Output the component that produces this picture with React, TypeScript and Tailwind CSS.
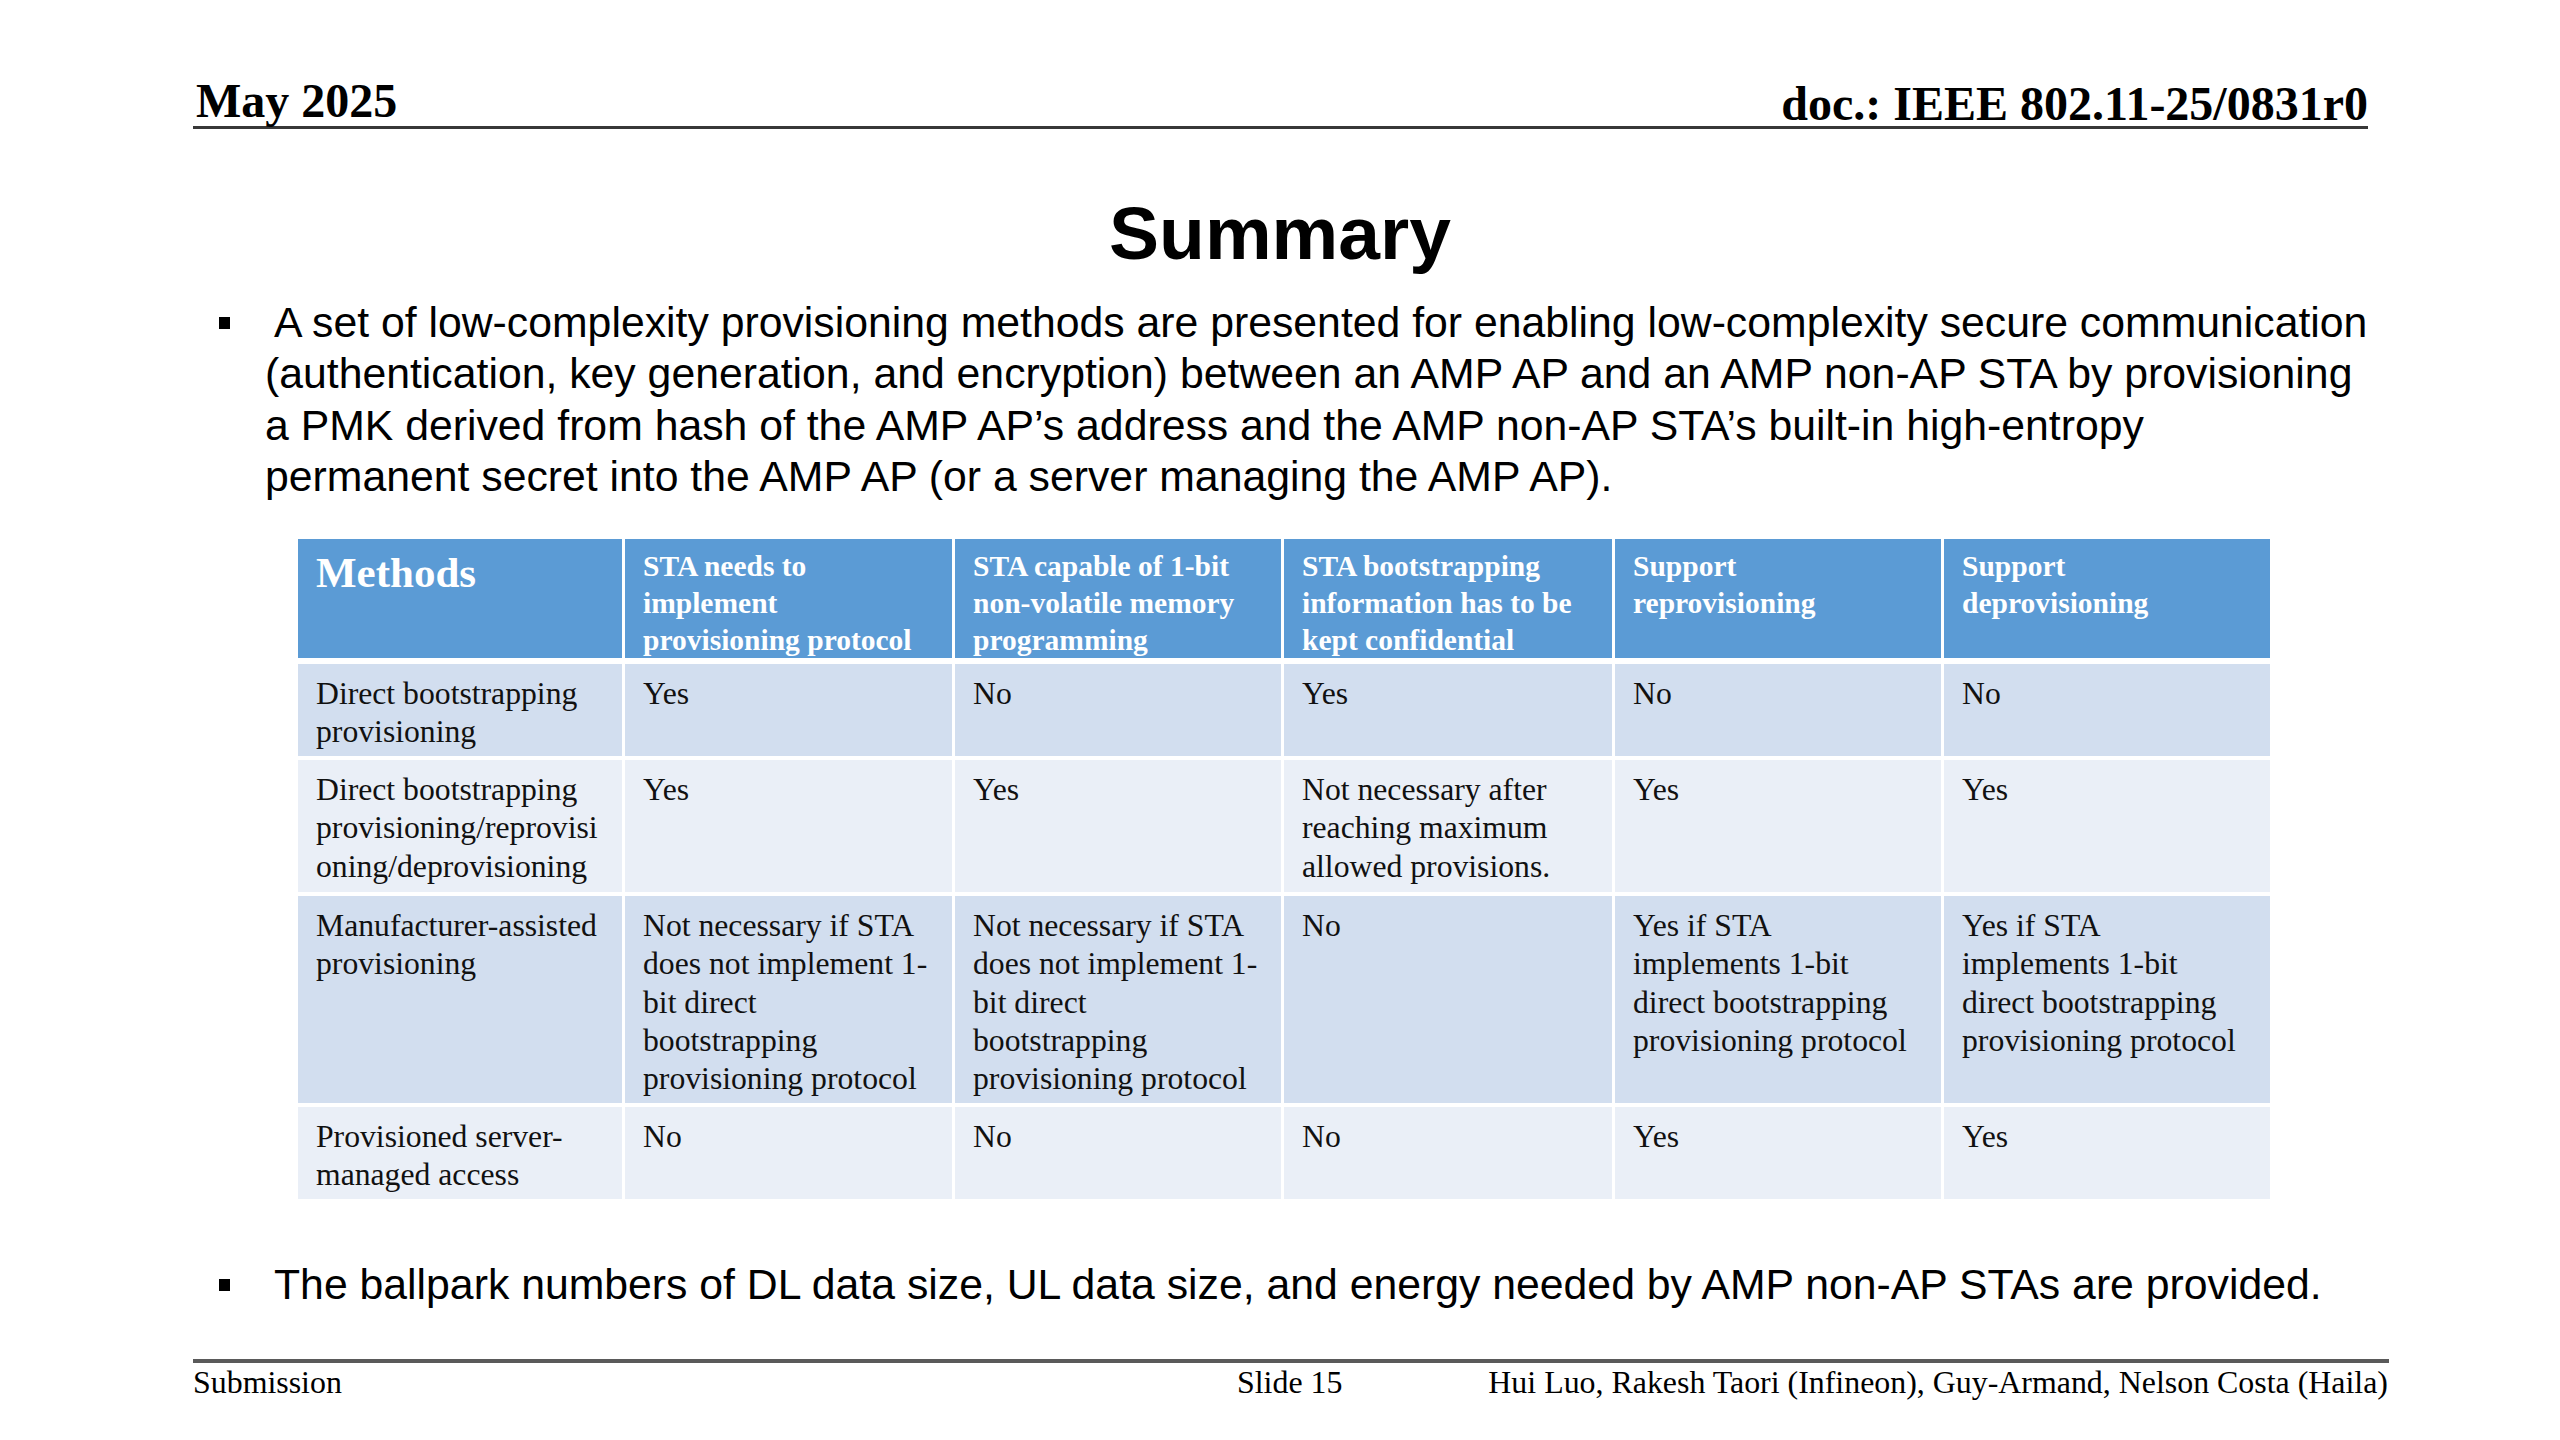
import React from "react";

const serif = { fontFamily: '"Liberation Serif", "Times New Roman", serif' };
const sans = { fontFamily: '"Liberation Sans", Arial, sans-serif' };

type Cell = string[];

const header: Cell[] = [
  ["STA needs to", "implement", "provisioning protocol"],
  ["STA capable of 1-bit", "non-volatile memory", "programming"],
  ["STA bootstrapping", "information has to be", "kept confidential"],
  ["Support", "reprovisioning"],
  ["Support", "deprovisioning"],
];

const notNecessary = ["Not necessary if STA", "does not implement 1-", "bit direct", "bootstrapping", "provisioning protocol"];
const yesIf = ["Yes if STA", "implements 1-bit", "direct bootstrapping", "provisioning protocol"];

const rows: { h: string; bg: string; cells: Cell[] }[] = [
  {
    h: "h-[92px]",
    bg: "bg-[#d2deef]",
    cells: [["Direct bootstrapping", "provisioning"], ["Yes"], ["No"], ["Yes"], ["No"], ["No"]],
  },
  {
    h: "h-[132px]",
    bg: "bg-[#eaeff7]",
    cells: [
      ["Direct bootstrapping", "provisioning/reprovisi", "oning/deprovisioning"],
      ["Yes"],
      ["Yes"],
      ["Not necessary after", "reaching maximum", "allowed provisions."],
      ["Yes"],
      ["Yes"],
    ],
  },
  {
    h: "h-[207px]",
    bg: "bg-[#d2deef]",
    cells: [["Manufacturer-assisted", "provisioning"], notNecessary, notNecessary, ["No"], yesIf, yesIf],
  },
  {
    h: "h-[92px]",
    bg: "bg-[#eaeff7]",
    cells: [["Provisioned server-", "managed access"], ["No"], ["No"], ["No"], ["Yes"], ["Yes"]],
  },
];

const cols = "grid grid-cols-[324px_327px_326px_328px_326px_326px] gap-x-[3px]";

function Lines({ lines }: { lines: string[] }) {
  return (
    <>
      {lines.map((l, i) => (
        <div key={i} className="whitespace-nowrap">
          {l}
        </div>
      ))}
    </>
  );
}

function Bullet({ children }: { children: React.ReactNode }) {
  return (
    <div className="flex items-start" style={sans}>
      <div className="ml-[26px] mt-[20px] h-[12px] w-[11px] shrink-0 bg-black" />
      <div className="ml-[35px] text-[42.75px] leading-[51.3px] text-black">{children}</div>
    </div>
  );
}

export default function App() {
  return (
    <div className="h-[1440px] w-[2560px] overflow-hidden bg-white">
      <div className="flex flex-col pl-[193px] pt-[79px]">
        {/* header */}
        <div
          className="mr-[192px] flex items-end justify-between border-b-[3px] border-[#383838] text-[48px] font-bold leading-[44px] text-black"
          style={serif}
        >
          <div className="pb-[3px] pl-[3px]">May 2025</div>
          <div>doc.: IEEE 802.11-25/0831r0</div>
        </div>

        <h1
          className="-ml-[193px] mt-[67px] text-center text-[75px] font-bold leading-[75px] text-black"
          style={sans}
        >
          Summary
        </h1>

        <div className="mt-[26px]">
          <Bullet>
            <div className="whitespace-nowrap indent-[9px]">
              A set of low-complexity provisioning methods are presented for enabling low-complexity secure communication
            </div>
            <div className="whitespace-nowrap">
              (authentication, key generation, and encryption) between an AMP AP and an AMP non-AP STA by provisioning
            </div>
            <div className="whitespace-nowrap">
              a PMK derived from hash of the AMP AP’s address and the AMP non-AP STA’s built-in high-entropy
            </div>
            <div className="whitespace-nowrap">permanent secret into the AMP AP (or a server managing the AMP AP).</div>
          </Bullet>
        </div>

        {/* table */}
        <div className="ml-[105px] mt-[37px] flex w-[1972px] flex-col gap-y-[4px]" style={serif}>
          <div className={`${cols} mb-[2px] h-[119px]`}>
            <div className="bg-[#5b9bd5] pl-[18px] pt-[9px] text-[43px] font-bold leading-[50px] text-white">
              Methods
            </div>
            {header.map((c, i) => (
              <div
                key={i}
                className="bg-[#5b9bd5] pl-[18px] pt-[9px] text-[29.5px] font-bold leading-[36.7px] text-white"
              >
                <Lines lines={c} />
              </div>
            ))}
          </div>
          {rows.map((r, ri) => (
            <div key={ri} className={`${cols} ${r.h}`}>
              {r.cells.map((c, ci) => (
                <div key={ci} className={`${r.bg} pl-[18px] pt-[11px] text-[31.7px] leading-[38.3px] text-[#111111]`}>
                  <Lines lines={c} />
                </div>
              ))}
            </div>
          ))}
        </div>

        <div className="mt-[60px]">
          <Bullet>
            <div className="whitespace-nowrap indent-[9px]">
              The ballpark numbers of DL data size, UL data size, and energy needed by AMP non-AP STAs are provided.
            </div>
          </Bullet>
        </div>

        {/* footer */}
        <div className="mr-[171px] mt-[49px] border-t-[4px] border-[#5a5a5a]" />
        <div className="mr-[172px] mt-[2px] flex text-[31.9px] leading-[36px] text-black" style={serif}>
          <div className="w-[1044px]">Submission</div>
          <div>Slide 15</div>
          <div className="ml-auto">Hui Luo, Rakesh Taori (Infineon), Guy-Armand, Nelson Costa (Haila)</div>
        </div>
      </div>
    </div>
  );
}
